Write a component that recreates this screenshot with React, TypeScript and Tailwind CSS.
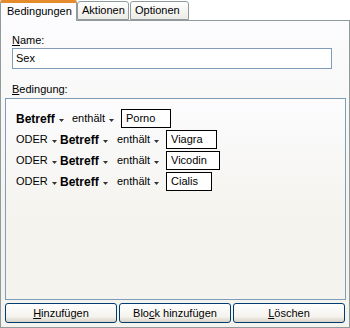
function Arrow() {
  return (
    <svg width="5" height="3" viewBox="0 0 5 3" className="ml-[4px] mt-[3px]">
      <path d="M0 0h5L2.5 3z" fill="#333" />
    </svg>
  )
}

function Pick({ label, bold, w }: { label: string; bold?: boolean; w: string }) {
  return (
    <div className={`flex items-center ${w}`}>
      <span className={bold ? 'font-bold text-[12px]' : ''}>{label}</span>
      <Arrow />
    </div>
  )
}

function Value({ text, w }: { text: string; w: string }) {
  return (
    <div className={`h-[19px] border border-black bg-white pl-[4px] leading-[17px] ${w}`}>{text}</div>
  )
}

const rows = [
  { value: 'Viagra', w: 'w-[51px]' },
  { value: 'Vicodin', w: 'w-[54px]' },
  { value: 'Cialis', w: 'w-[46px]' },
]

function Btn({ children }: { children: React.ReactNode }) {
  return (
    <button className="w-[112px] h-[20px] rounded-[3px] border border-[#003c74] bg-[linear-gradient(#ffffff,#f4f3ee_70%,#d8d2c6)] text-center leading-[18px]">
      {children}
    </button>
  )
}

export default function App() {
  return (
    <div className="w-[350px] h-[328px] bg-white text-black text-[11px] font-['Tahoma','Liberation_Sans',sans-serif]">
      <div className="flex items-end h-[21px] relative z-10">
        <div className="w-[77px] h-[21px] border-x border-[#919b9c] border-t-[3px] border-t-[#e68b2c] bg-[#fcfcfe] rounded-t-[2px] pl-[6px] leading-[14px] pt-[1px]">
          Bedingungen
        </div>
        <div className="w-[52px] h-[19px] mb-[1px] border border-[#919b9c] rounded-t-[3px] bg-[linear-gradient(#ffffff,#ecebe6)] pl-[4px] leading-[16px]">
          Aktionen
        </div>
        <div className="w-[59px] h-[19px] mb-[1px] ml-[1px] border border-[#919b9c] rounded-t-[3px] bg-[linear-gradient(#ffffff,#ecebe6)] pl-[4px] leading-[16px]">
          Optionen
        </div>
      </div>
      <div className="-mt-[1px] h-[308px] border border-[#919b9c] bg-[linear-gradient(#fcfcfe,#f4f3ee_60%)] px-[4px] flex flex-col">
        <div className="pl-[7px] mt-[13px] leading-[13px]">
          <span className="underline">N</span>ame:
        </div>
        <div className="ml-[7px] mt-[1px] w-[320px] h-[21px] border border-[#7f9db9] bg-white pl-[3px] leading-[19px]">Sex</div>
        <div className="pl-[7px] mt-[14px] leading-[13px]">
          <span className="underline">B</span>edingung:
        </div>
        <div className="mt-[2px] w-[341px] h-[202px] border border-[#7f9db9] bg-[linear-gradient(#fcfcfe,#f4f3ee_60%)] pl-[10px] pt-[10px] flex flex-col gap-[2px]">
          <div className="flex items-center h-[19px]">
            <Pick label="Betreff" bold w="w-[56px]" />
            <Pick label="enthält" w="w-[49px]" />
            <Value text="Porno" w="w-[50px]" />
          </div>
          {rows.map((r) => (
            <div key={r.value} className="flex items-center h-[19px]">
              <Pick label="ODER" w="w-[44px]" />
              <Pick label="Betreff" bold w="w-[57px]" />
              <Pick label="enthält" w="w-[49px]" />
              <Value text={r.value} w={r.w} />
            </div>
          ))}
        </div>
        <div className="mt-[3px] flex gap-[2px]">
          <Btn>
            <span className="underline">H</span>inzufügen
          </Btn>
          <Btn>
            Blo<span className="underline">c</span>k hinzufügen
          </Btn>
          <Btn>
            <span className="underline">L</span>öschen
          </Btn>
        </div>
      </div>
    </div>
  )
}
